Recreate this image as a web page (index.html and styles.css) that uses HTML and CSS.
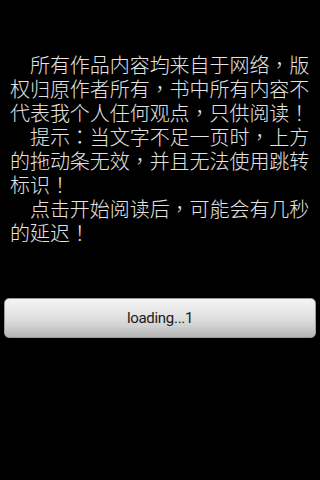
FILE: index.html
```html
<!DOCTYPE html>
<html>
<head>
<meta charset="utf-8">
<link rel="stylesheet" href="styles.css">
</head>
<body>
<div class="screen">
  <p class="notice">　所有作品内容均来自于网络，版权归原作者所有，书中所有内容不代表我个人任何观点，只供阅读！<br>　提示：当文字不足一页时，上方的拖动条无效，并且无法使用跳转标识！<br>　点击开始阅读后，可能会有几秒的延迟！</p>
  <div class="btn-wrap"><button class="btn">loading...1</button></div>
</div>
</body>
</html>
```
FILE: styles.css
```css
html, body {
  margin: 0;
  padding: 0;
  background: #000;
}
.screen {
  width: 320px;
  height: 480px;
  background: #000;
  overflow: hidden;
}
.notice {
  margin: 0;
  padding: 53px 10px 0 10px;
  color: #e4e4e4;
  font-family: "Noto Sans CJK TC", "DejaVu Sans", sans-serif;
  font-weight: 300;
  font-size: 20px;
  line-height: 24px;
  letter-spacing: -0.05px;
  word-break: break-all;
}
.btn-wrap {
  padding: 53px 4px 0 4px;
}
.btn {
  display: block;
  width: 100%;
  height: 40px;
  border: 1px solid #9a9a9a;
  border-radius: 5px;
  background: linear-gradient(to bottom, #f4f4f4 0%, #e4e4e4 40%, #d2d2d2 70%, #b4b4b4 100%);
  color: #1a1a1a;
  font-family: Roboto, "DejaVu Sans", sans-serif;
  font-size: 15px;
  letter-spacing: -0.3px;
  padding: 0;
}
```
